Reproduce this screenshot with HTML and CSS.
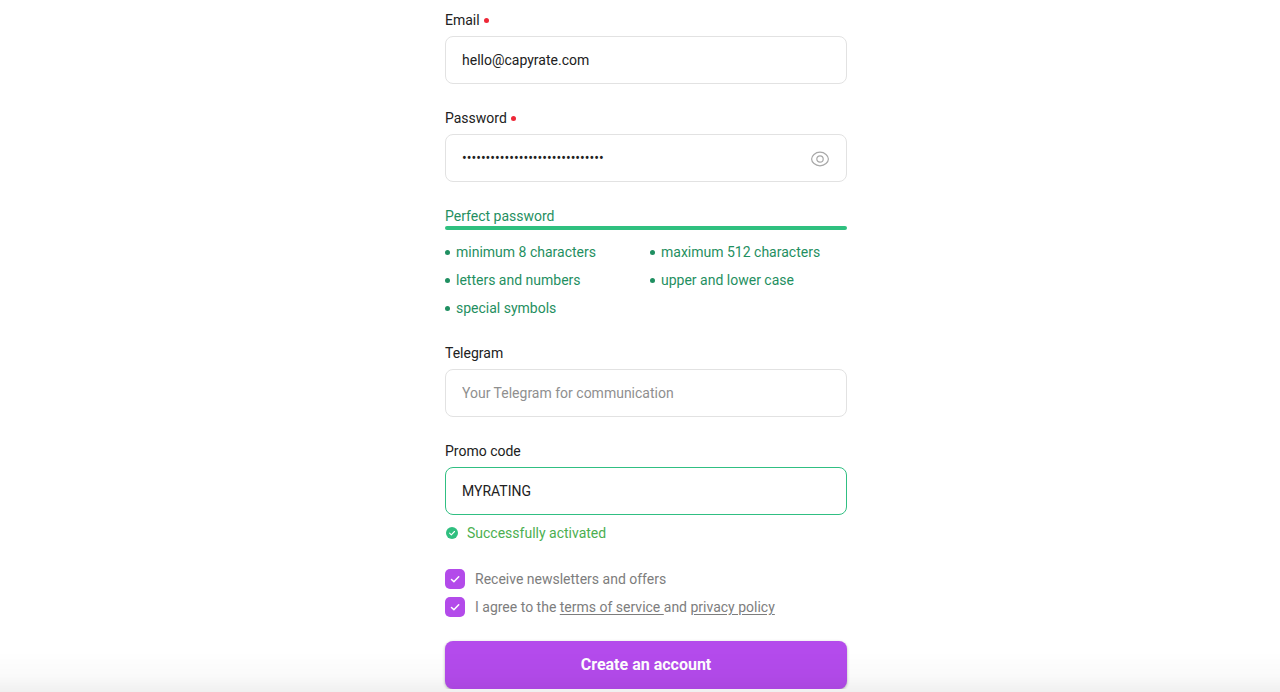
FILE: index.html
```html
<!DOCTYPE html>
<html lang="en">
<head>
    <meta charset="UTF-8">
    <meta name="viewport" content="width=device-width, initial-scale=1.0">
    <title>Create an account</title>
    <link rel="stylesheet" href="styles.css">
</head>
<body>
    <main class="page">
        <form class="signup">
            <div class="field">
                <label class="field-label required" for="email">Email</label>
                <input class="field-input" type="email" id="email" value="hello@capyrate.com" required>
            </div>

            <div class="field">
                <label class="field-label required" for="password">Password</label>
                <div class="password-box">
                    <input class="field-input" type="password" id="password" value="CapyRate!2024_secure#Pass-word" required>
                    <button class="toggle-password" type="button" aria-label="Show password">
                        <svg width="20" height="20" viewBox="0 0 20 20" fill="none" stroke="currentColor" stroke-width="1.2">
                            <path d="M1.6 10C1.6 6.9 5.2 3.200 10 3.200S18.400 6.900 18.400 10 14.800 16.800 10 16.800 1.600 13.100 1.600 10Z"/>
                            <circle cx="10" cy="10" r="3.2"/>
                        </svg>
                    </button>
                </div>
            </div>

            <!-- Password strength -->
            <div class="strength">
                <p class="strength-title">Perfect password</p>
                <div class="strength-bar"></div>
                <ul class="rules">
                    <li>minimum 8 characters</li>
                    <li>maximum 512 characters</li>
                    <li>letters and numbers</li>
                    <li>upper and lower case</li>
                    <li>special symbols</li>
                </ul>
            </div>

            <div class="field">
                <label class="field-label" for="telegram">Telegram</label>
                <input class="field-input" type="text" id="telegram" placeholder="Your Telegram for communication">
            </div>

            <div class="field">
                <label class="field-label" for="promo">Promo code</label>
                <input class="field-input success" type="text" id="promo" value="MYRATING">
                <p class="field-hint">
                    <svg width="14" height="14" viewBox="0 0 14 14" fill="none">
                        <circle cx="7" cy="7" r="6" fill="#2fbf7f"/>
                        <path d="M4.600 7.200l1.700 1.600 3.200-3.300" stroke="#fff" stroke-width="1.1" stroke-linecap="round" stroke-linejoin="round"/>
                    </svg>
                    Successfully activated
                </p>
            </div>

            <!-- Agreements -->
            <div class="checks">
                <div class="check">
                    <span class="check-box">
                        <input type="checkbox" id="newsletter" checked>
                        <svg viewBox="0 0 20 20" fill="none"><path d="M6.500 10.500l2.400 2.300 4.800-5" stroke="#fff" stroke-width="1.5" stroke-linecap="round" stroke-linejoin="round"/></svg>
                    </span>
                    <label for="newsletter">Receive newsletters and offers</label>
                </div>
                <div class="check">
                    <span class="check-box">
                        <input type="checkbox" id="terms" checked>
                        <svg viewBox="0 0 20 20" fill="none"><path d="M6.500 10.500l2.400 2.300 4.800-5" stroke="#fff" stroke-width="1.5" stroke-linecap="round" stroke-linejoin="round"/></svg>
                    </span>
                    <label for="terms">I agree to the <a href="#terms">terms of service </a>and <a href="#privacy">privacy policy</a></label>
                </div>
            </div>

            <button class="submit" type="submit">Create an account</button>
        </form>
    </main>
    <div class="page-fade"></div>
</body>
</html>
```
FILE: styles.css
```css
* {
    box-sizing: border-box;
    margin: 0;
    padding: 0;
}

body {
    background: #fff;
    color: #212121;
    font-family: Roboto, Arial, sans-serif;
    font-size: 14px;
    line-height: 20px;
}

input,
button {
    font: inherit;
}

.page {
    padding: 10px 0 0 12px;
}

.signup {
    display: flex;
    flex-direction: column;
    gap: 24px;
    max-width: 402px;
    margin: 0 auto;
}

/* Fields */
.field {
    display: flex;
    flex-direction: column;
    gap: 6px;
}

.field-label {
    display: flex;
    align-items: center;
    gap: 4px;
}

.field-label.required::after {
    content: "";
    width: 5px;
    height: 5px;
    border-radius: 50%;
    background: #ee2737;
}

.field-input {
    width: 100%;
    height: 48px;
    padding: 0 16px;
    border: 1px solid #e2e2e2;
    border-radius: 8px;
    background: #fff;
    color: #212121;
    outline: none;
}

.field-input::placeholder {
    color: #8f8f8f;
}

.field-input.success {
    border-color: #30bf82;
}

.password-box {
    position: relative;
}

.toggle-password {
    position: absolute;
    top: 15px;
    right: 17px;
    display: flex;
    border: 0;
    background: none;
    color: #a8a8a8;
    cursor: pointer;
}

.field-hint {
    display: flex;
    align-items: center;
    gap: 8px;
    padding: 2px 0;
    color: #4caf50;
}

/* Password strength */
.strength {
    color: #1f8f61;
}

.strength-bar {
    height: 4px;
    border-radius: 2px;
    background: #2fc07f;
}

.rules {
    display: grid;
    grid-template-columns: 1fr 1fr;
    gap: 8px;
    padding: 12px 0 1px;
    list-style: none;
}

.rules li {
    display: flex;
    align-items: center;
    gap: 6px;
}

.rules li::before {
    content: "";
    width: 5px;
    height: 5px;
    border-radius: 50%;
    background: currentColor;
}

/* Checkboxes */
.checks {
    display: flex;
    flex-direction: column;
    gap: 8px;
    color: #7d7d7d;
}

.check {
    display: flex;
    align-items: center;
    gap: 10px;
}

.check-box {
    display: grid;
    width: 20px;
    height: 20px;
}

.check-box input,
.check-box svg {
    grid-area: 1 / 1;
    width: 20px;
    height: 20px;
}

.check-box input {
    appearance: none;
    border-radius: 5px;
    background: #b34bea;
}

.check-box svg {
    pointer-events: none;
}

.check a {
    color: inherit;
    text-underline-offset: 2px;
}

.submit {
    height: 48px;
    border: 0;
    border-radius: 8px;
    background: #b44bec;
    box-shadow: 0 1px 3px rgba(0, 0, 0, 0.3);
    color: #fff;
    font-size: 16px;
    font-weight: 700;
    cursor: pointer;
}

/* Soft shade along the bottom edge of the window */
.page-fade {
    position: fixed;
    right: 0;
    bottom: 0;
    left: 0;
    height: 40px;
    background: linear-gradient(rgba(0, 0, 0, 0), rgba(0, 0, 0, 0.02) 60%, rgba(0, 0, 0, 0.06));
    pointer-events: none;
}
```
